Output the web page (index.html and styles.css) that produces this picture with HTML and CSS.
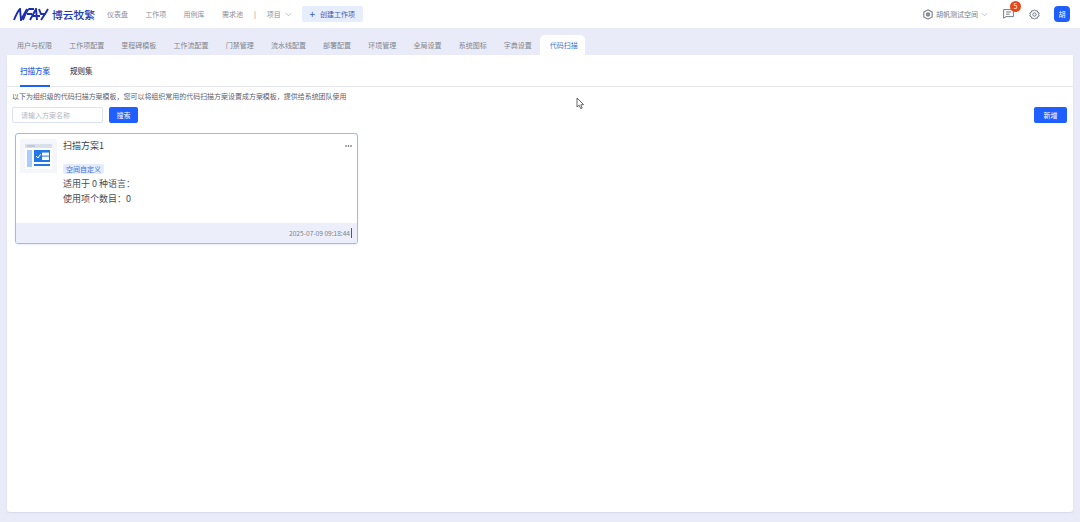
FILE: index.html
```html
<!DOCTYPE html>
<html lang="zh-CN">
<head>
    <meta charset="utf-8" />
    <title>代码扫描</title>
    <link rel="stylesheet" href="styles.css">
</head>
<body>
    <header class="topbar">
        <div class="brand">
            <svg class="brand-mark" width="37" height="13" viewBox="0 0 37 13" fill="none" stroke="#1b2fb0" stroke-width="1.9">
                <path d="M1 12 C3 7 5 3 7 1 L8 12 L14 1" />
                <path d="M10 12 C12 7 14 2 16 1 H21 M14 6 H19" />
                <path d="M17 12 L23 1 L24 12 M20 8 H27" />
                <path d="M26 1 L28 6 H32 L35 1 M32 6 L28 12" />
            </svg>
            <span class="brand-name">博云牧繁</span>
        </div>
        <nav class="main-nav">
            <a>仪表盘</a>
            <a>工作项</a>
            <a>用例库</a>
            <a>需求池</a>
        </nav>
        <span class="nav-sep">|</span>
        <a class="nav-project">项目
            <svg width="7" height="5" viewBox="0 0 8 5" fill="none" stroke="#a4a9b6" stroke-width=".8"><path d="M1 1 L4 4 L7 1" /></svg>
        </a>
        <button class="btn-create"><span class="plus">+</span>创建工作项</button>
        <div class="top-right">
            <svg class="space-icon" width="10" height="11" viewBox="0 0 10 11" fill="none" stroke="#777c88" stroke-width="1.1"><path d="M5 .8 L9.2 3 V8 L5 10.2 L.8 8 V3 Z" /><circle cx="5" cy="5.5" r="1.6" fill="#9a9ea9" /></svg>
            <span class="space-name">胡帆测试空间</span>
            <svg class="space-caret" width="7" height="5" viewBox="0 0 8 5" fill="none" stroke="#a4a9b6" stroke-width=".8"><path d="M1 1 L4 4 L7 1" /></svg>
            <div class="msg">
                <svg width="11" height="10" viewBox="0 0 11 10" fill="none" stroke="#666b78" stroke-width=".9"><path d="M.6 .6 H10.4 V7.6 H3 L.6 9.2 Z M3 3 H8 M3 5.2 H6.5" /></svg>
                <span class="badge">5</span>
            </div>
            <svg class="gear" width="11" height="11" viewBox="0 0 12 12" fill="none" stroke="#666b78" stroke-width="1"><path d="M6 .8 L7.2 2.1 L9 1.9 L9.5 3.6 L11.2 4.4 L10.4 6 L11.2 7.6 L9.5 8.4 L9 10.1 L7.2 9.9 L6 11.2 L4.8 9.9 L3 10.1 L2.5 8.4 L.8 7.6 L1.6 6 L.8 4.4 L2.5 3.6 L3 1.9 L4.8 2.1 Z" /><circle cx="6" cy="6" r="1.8" /></svg>
            <span class="avatar">胡</span>
        </div>
    </header>

    <div class="settings-tabs">
        <a>用户与权限</a>
        <a>工作项配置</a>
        <a>里程碑模板</a>
        <a>工作流配置</a>
        <a>门禁管理</a>
        <a>流水线配置</a>
        <a>部署配置</a>
        <a>环境管理</a>
        <a>全局设置</a>
        <a>系统图标</a>
        <a>字典设置</a>
        <a class="active">代码扫描</a>
    </div>

    <main class="panel">
        <div class="sub-tabs">
            <a class="active">扫描方案</a>
            <a>规则集</a>
        </div>
        <div class="panel-body">
            <p class="desc">以下为组织级的代码扫描方案模板，您可以将组织常用的代码扫描方案设置成方案模板，提供给系统团队使用</p>
            <div class="toolbar">
                <input class="search-input" placeholder="请输入方案名称" />
                <button class="btn-primary">搜索</button>
                <button class="btn-primary btn-add">新增</button>
            </div>
            <div class="card">
                <div class="card-main">
                    <div class="thumb">
                        <svg width="27" height="25" viewBox="0 0 27 25">
                            <rect width="27" height="25" fill="#fff" />
                            <rect width="27" height="4" fill="#d9e0ea" />
                            <rect x="2" y="1.4" width="8" height="1.2" fill="#b4bcc8" />
                            <rect x="2" y="6" width="5" height="17" fill="#a9cdf7" />
                            <rect x="9" y="6" width="16" height="12" fill="#1f7ae8" />
                            <rect x="17" y="8.6" width="7" height="7.4" fill="#fff" />
                            <rect x="17" y="11.6" width="7" height="1" fill="#1f7ae8" />
                            <path d="M11 12 L13 14 L15.6 10.2" fill="none" stroke="#fff" stroke-width="1" />
                            <rect x="9" y="20" width="16" height="2" fill="#1f7ae8" />
                        </svg>
                    </div>
                    <div class="card-info">
                        <h3 class="card-title">扫描方案1</h3>
                        <span class="tag">空间自定义</span>
                        <p class="card-line">适用于 0 种语言：</p>
                        <p class="card-line">使用项个数目：0</p>
                    </div>
                    <svg class="more" width="7" height="2" viewBox="0 0 7 2" fill="#444"><circle cx="1" cy="1" r=".8" /><circle cx="3.5" cy="1" r=".8" /><circle cx="6" cy="1" r=".8" /></svg>
                </div>
                <div class="card-foot">
                    <span class="card-time">2025-07-09 09:18:44</span>
                </div>
            </div>
        </div>
    </main>

    <svg class="cursor" width="9" height="13" viewBox="0 0 9 13" fill="#fff" stroke="#555" stroke-width=".9"><path d="M1 1 V10 L3.2 8.2 L4.6 11.6 L6.2 11 L4.8 7.8 L7.6 7.6 Z" /></svg>
</body>
</html>
```

FILE: styles.css
```css
* {
    box-sizing: border-box;
}
html, body {
    height: 100%;
}
body {
    margin: 0;
    overflow: hidden;
    display: flex;
    flex-direction: column;
    background: #e9ecf8;
    color: #3c3f48;
    font-family: "Noto Sans CJK SC", "Liberation Sans", sans-serif;
    font-size: 7px;
}
p, h3 {
    margin: 0;
}
button {
    border: none;
    font-family: inherit;
}

/* top bar */
.topbar {
    height: 28px;
    flex: none;
    display: flex;
    align-items: center;
    padding: 0 10px 0 13px;
    background: #fff;
    color: #8b8f9a;
}
.brand {
    display: flex;
    align-items: center;
    gap: 2px;
    width: 94px;
}
.brand-name {
    color: #1d39b4;
    font-size: 10.75px;
    font-weight: 500;
}
.main-nav {
    display: flex;
    gap: 17.3px;
}
.nav-sep {
    margin-left: 11px;
    color: #777;
}
.nav-project {
    display: flex;
    align-items: center;
    gap: 4px;
    margin-left: 11px;
}
.btn-create {
    height: 16px;
    width: 61px;
    margin-left: 10px;
    padding: 0;
    border-radius: 2px;
    background: #e6edfd;
    color: #3a5bb8;
    font-size: 7px;
}
.plus {
    margin-right: 5px;
    font-size: 10px;
    line-height: 7px;
    vertical-align: -1px;
}
.top-right {
    margin-left: auto;
    display: flex;
    align-items: center;
}
.space-name {
    margin-left: 3px;
    color: #777c88;
}
.space-caret {
    margin-left: 3px;
}
.msg {
    position: relative;
    display: flex;
    margin-left: 15px;
}
.badge {
    position: absolute;
    top: -8px;
    left: 7px;
    width: 11px;
    height: 11px;
    border-radius: 50%;
    background: #e8471d;
    color: #fff;
    font-size: 7px;
    line-height: 11px;
    text-align: center;
}
.gear {
    margin-left: 15px;
}
.avatar {
    width: 16px;
    height: 16px;
    margin-left: 14px;
    border-radius: 4px;
    background: #1f5eff;
    color: #fff;
    font-size: 7px;
    line-height: 16px;
    text-align: center;
}

/* settings tabs */
.settings-tabs {
    height: 27px;
    flex: none;
    display: flex;
    align-items: flex-end;
    padding-left: 8.4px;
    color: #80848f;
}
.settings-tabs a {
    height: 20px;
    padding: 0 8.6px;
    line-height: 20px;
}
.settings-tabs a.active {
    margin-left: -.6px;
    padding: 0 7px 0 10px;
    border-radius: 5px 5px 0 0;
    background: #fff;
    color: #3f6fd8;
}

/* panel */
.panel {
    flex: 1;
    margin: 0 7px 10px;
    border-radius: 0 0 3px 3px;
    background: #fff;
    box-shadow: 0 1px 2px rgba(120, 130, 170, .2);
}
.sub-tabs {
    height: 32px;
    display: flex;
    gap: 20px;
    padding-left: 13px;
    border-bottom: 1px solid #e6e7ec;
    font-size: 7.5px;
    font-weight: 500;
    color: #4a4d57;
}
.sub-tabs a {
    height: 32px;
    line-height: 32px;
}
.sub-tabs a.active {
    color: #2a62e8;
    border-bottom: 2px solid #1f5eff;
}
.panel-body {
    padding: 4px 6px 0 5px;
}
.desc {
    height: 10px;
    font-size: 6.97px;
    line-height: 10px;
    color: #5c606b;
}
.toolbar {
    display: flex;
    gap: 6px;
    margin-top: 6px;
}
.search-input {
    width: 91px;
    height: 16px;
    padding: 0 8px;
    border: 1px solid #dbe3f3;
    border-radius: 2px;
    outline: none;
    font-family: inherit;
    font-size: 7px;
}
.search-input::placeholder {
    color: #b3b6be;
}
.btn-primary {
    width: 29px;
    height: 16px;
    padding: 0;
    border-radius: 2px;
    background: #1f5eff;
    color: #fff;
    font-size: 7px;
}
.btn-add {
    width: 33px;
    margin-left: auto;
}

/* card */
.card {
    width: 343px;
    height: 111px;
    margin: 10px 0 0 3px;
    display: flex;
    flex-direction: column;
    border: 1px solid #93bdf3;
    border-radius: 3px;
    overflow: hidden;
    box-shadow: 0 1px 2px rgba(90, 110, 160, .12);
}
.card-main {
    position: relative;
    flex: 1;
    display: flex;
    gap: 6px;
    padding: 5px 4px;
}
.thumb {
    width: 37px;
    height: 34px;
    display: flex;
    align-items: center;
    justify-content: center;
    background: #f5f6fa;
}
.card-info {
    display: flex;
    flex-direction: column;
    align-items: flex-start;
}
.card-title {
    height: 15px;
    margin-top: -1px;
    font-size: 9px;
    font-weight: 400;
    line-height: 15px;
    color: #3a3d46;
}
.tag {
    height: 10px;
    margin-top: 11px;
    padding: 0 3px;
    border-radius: 2px;
    background: #e3ebfd;
    color: #3f6fd8;
    font-size: 7px;
    line-height: 10px;
}
.card-line {
    height: 15px;
    font-size: 9px;
    line-height: 15px;
    color: #4a4d57;
}
.tag + .card-line {
    margin-top: 2px;
}
.more {
    position: absolute;
    top: 11px;
    right: 5px;
}
.card-foot {
    height: 20px;
    flex: none;
    display: flex;
    align-items: center;
    justify-content: flex-end;
    padding-right: 5px;
    background: #eceffa;
}
.card-time {
    padding-right: 1px;
    border-right: 1px solid #55585f;
    color: #7d808a;
    font-size: 6.6px;
    line-height: 10px;
}

.cursor {
    position: absolute;
    left: 576px;
    top: 97px;
}
```
